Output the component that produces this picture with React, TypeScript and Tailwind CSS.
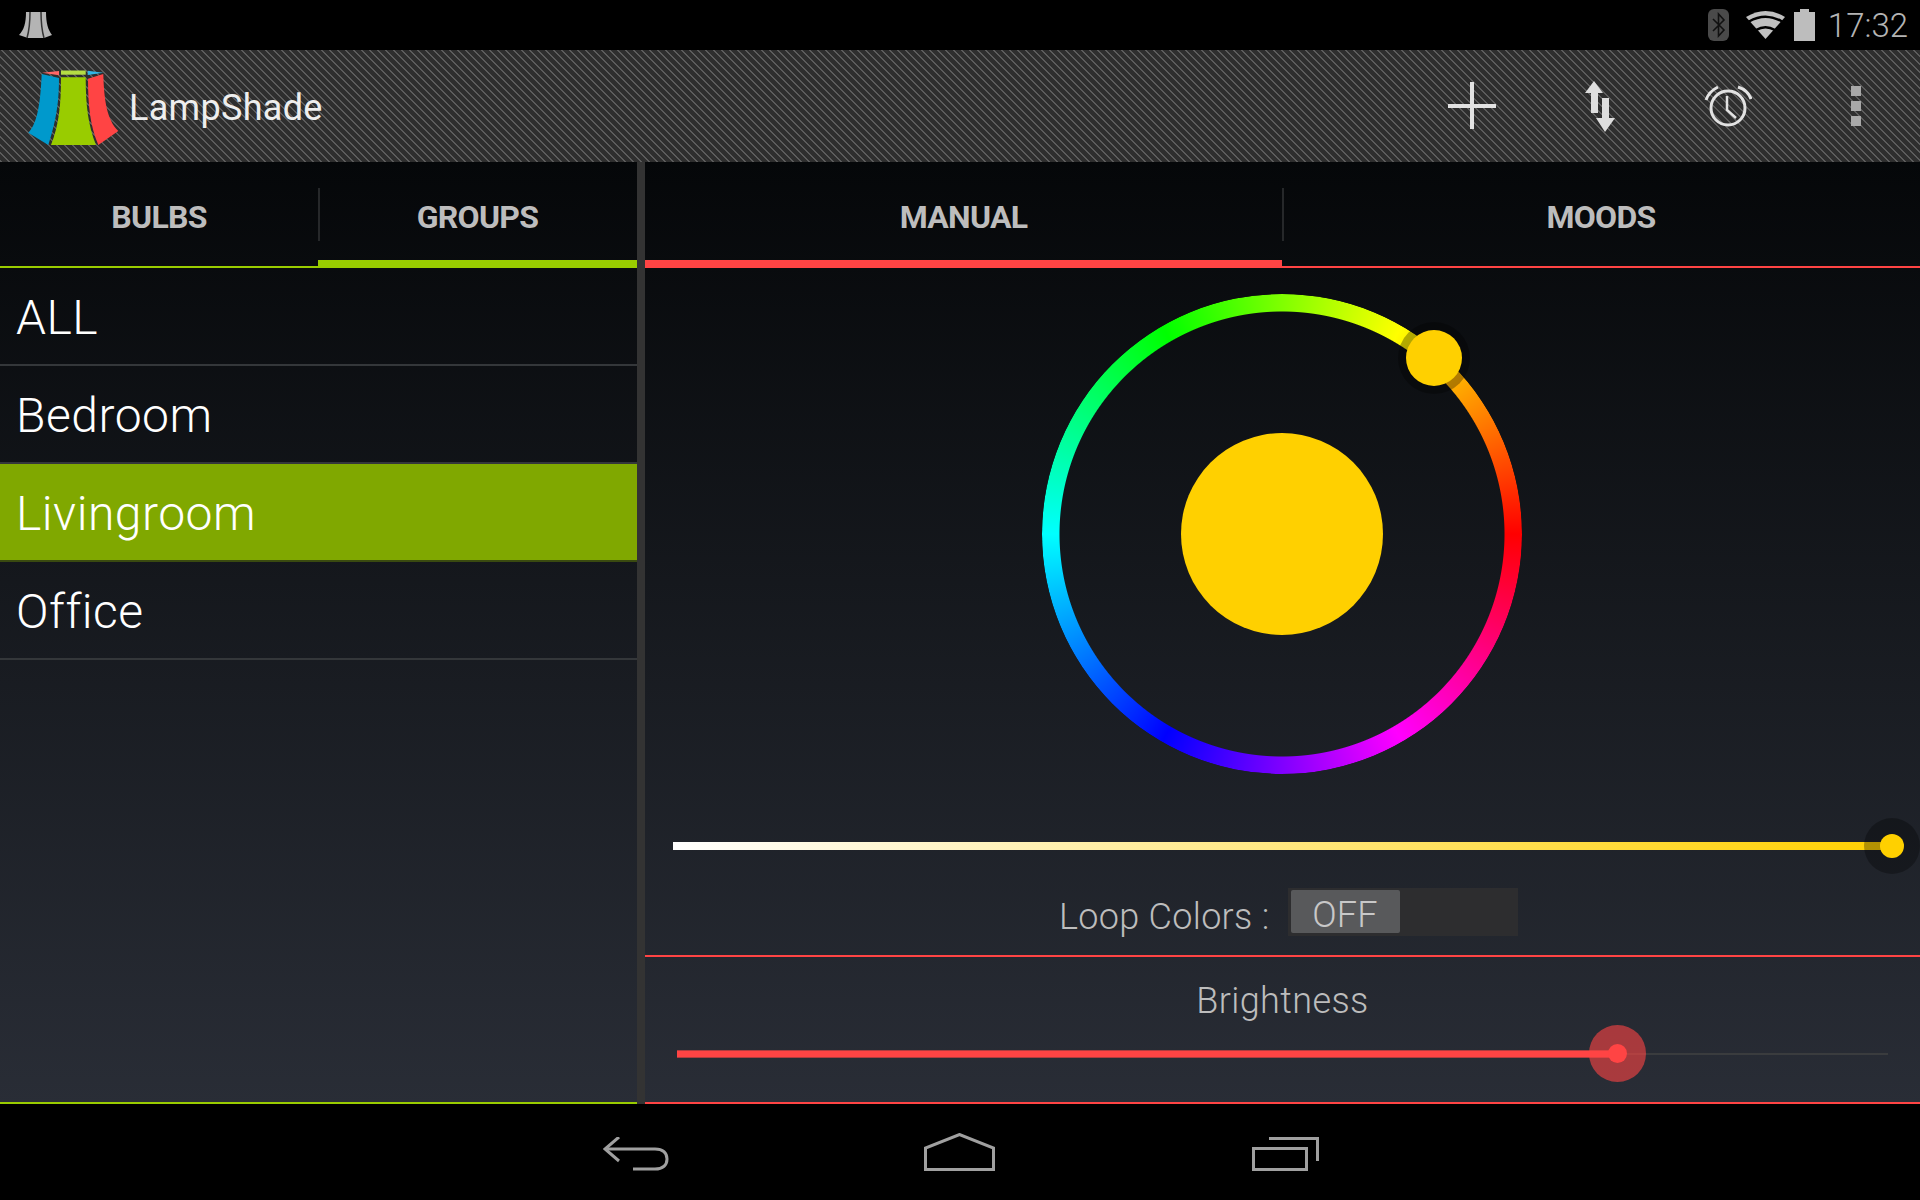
const font = "font-['Roboto',sans-serif]";

function ShadeLogo() {
  return (
    <svg width="110" height="90" viewBox="0 0 110 90" className="shrink-0 -mt-[2px]">
      <path d="M22 12.7 L39 11 L39 15.3 Z" fill="#ff6666" />
      <path d="M41 10.5 H65.7 V14.7 H41 Z" fill="#b5dd44" />
      <path d="M67.7 10.7 L83.3 12.7 L67.7 15 Z" fill="#33b5e5" />
      <path d="M21.7 14 L39 18 C39 40 37 58 28.3 85 L8.3 72.7 C18 63 20.5 40 21.7 14 Z" fill="#0099cc" />
      <path d="M41 17.3 H65.7 C65.7 45 68 65 76 85 H31 C39 65 41 45 41 17.3 Z" fill="#99cc00" />
      <path d="M68 18.7 L83.3 14 C84 40 87 60 98.3 71 L78.3 85 C70 65 68 45 68 18.7 Z" fill="#ff4444" />
    </svg>
  );
}

function SmallShade() {
  return (
    <svg width="34" height="28" viewBox="0 0 34 28">
      <path d="M7 1 L27 1 C27 12 29 19 33 24 L25 27 L9 27 L0 24 C5 19 7 12 7 1 Z" fill="#b4b4b4" />
      <path d="M11 1 C11 12 10 20 8 27 M22 1 C22 12 23 20 25 27" fill="none" stroke="#333" strokeWidth="1.5" />
    </svg>
  );
}

function Bluetooth() {
  return (
    <div className="w-[21px] h-8 rounded-[6px] bg-[#4a4a4a] flex items-center justify-center">
      <svg width="15" height="26" viewBox="0 0 15 26" fill="none" stroke="#111" strokeWidth="1.6">
        <path d="M2 7 L13 18 L7.5 24 L7.5 2 L13 8 L2 19" />
      </svg>
    </div>
  );
}

function Wifi() {
  return (
    <svg width="39" height="30" viewBox="0 0 39 30">
      <path d="M0 7 Q19.5 -5 39 7 L19.5 29 Z" fill="#c0c0c0" />
      <path d="M3 11.5 Q19.5 2 36 11.5 M10 20 Q19.5 14.5 29 20" fill="none" stroke="#000" strokeWidth="2.5" />
    </svg>
  );
}

function Battery() {
  return (
    <svg width="21" height="32" viewBox="0 0 21 32">
      <path d="M6 0 H15 V3 H21 V32 H0 V3 H6 Z" fill="#bdbdbd" />
    </svg>
  );
}

function PlusIcon() {
  return (
    <svg width="48" height="48" viewBox="0 0 48 48" fill="#e2e2e2">
      <rect x="22" y="0" width="4" height="47" />
      <rect x="0" y="22" width="48" height="4" />
    </svg>
  );
}

function SwapIcon() {
  return (
    <svg width="32" height="52" viewBox="0 0 32 52" fill="#dedede">
      <path d="M10 1 L19 13 H14 V33 H7 V13 H1 Z" />
      <path d="M18 18 H25 V38 H31 L21 52 L12 38 H18 Z" />
    </svg>
  );
}

function AlarmIcon() {
  return (
    <svg width="48" height="44" viewBox="0 0 48 44" fill="none" stroke="#e2e2e2">
      <circle cx="24" cy="24" r="17" strokeWidth="3" />
      <path d="M23 12 V26 L32 34" strokeWidth="2.5" />
      <path d="M2 16 C4 10 8 6 14 3 M47 15 C45 9 40 5 34 3" strokeWidth="3" />
    </svg>
  );
}

function MenuDots() {
  return (
    <div className="flex flex-col gap-[5px]">
      <div className="w-[10px] h-[10px] bg-[#a8a8a8]" />
      <div className="w-[10px] h-[10px] bg-[#a8a8a8]" />
      <div className="w-[10px] h-[10px] bg-[#a8a8a8]" />
    </div>
  );
}

function BackIcon() {
  return (
    <svg width="66" height="34" viewBox="0 0 66 34" fill="none" stroke="#a0a0a0" strokeWidth="3">
      <path d="M16 0 L2 12 L16 24" />
      <path d="M2 12 H52 C60 12 64 16 64 22 C64 28 60 32 52 32 H30" />
    </svg>
  );
}

function HomeIcon() {
  return (
    <svg width="71" height="38" viewBox="0 0 71 38" fill="none" stroke="#a0a0a0" strokeWidth="3">
      <path d="M1.5 36.5 V15 L35.5 1.5 L69.5 15 V36.5 Z" />
    </svg>
  );
}

function RecentsIcon() {
  return (
    <svg width="67" height="34" viewBox="0 0 67 34" fill="none" stroke="#a0a0a0" strokeWidth="3">
      <rect x="1.5" y="11.5" width="53" height="21" />
      <path d="M17 1.5 H65.5 V24" />
    </svg>
  );
}

function Tab({ label, active, color, width }: { label: string; active?: boolean; color: string; width: string }) {
  return (
    <div className={`relative h-full flex items-center justify-center pt-[5px] ${width}`}>
      <span className="text-[32px] leading-none font-bold text-[#bdbdbd] tracking-[-0.7px]">{label}</span>
      {active && <div className={`absolute left-0 right-0 bottom-0 h-[6px] ${color}`} />}
    </div>
  );
}

function GroupRow({ name, selected }: { name: string; selected?: boolean }) {
  return (
    <div
      className={`h-[98px] flex items-center pl-[16px] pt-[3px] border-b-2 text-[48px] tracking-[0.5px] font-light text-white ${
        selected ? "bg-[#80a800] border-[#3a4a10]" : "border-[#34373a]"
      }`}
    >
      {name}
    </div>
  );
}

export default function App() {
  const groups = ["ALL", "Bedroom", "Livingroom", "Office"];

  return (
    <div className={`w-[1920px] h-[1200px] bg-black flex flex-col overflow-hidden ${font}`}>
      {/* status bar */}
      <div className="h-[50px] flex items-center pl-[19px] pr-[12px]">
        <SmallShade />
        <div className="ml-auto flex items-center">
          <Bluetooth />
          <div className="ml-[17px]"><Wifi /></div>
          <div className="ml-[9px]"><Battery /></div>
          <span className="ml-[13px] text-[33px] leading-none text-[#b4b4b4] font-light">17:32</span>
        </div>
      </div>

      {/* action bar */}
      <div className="h-[112px] flex items-center pl-[20px] bg-[linear-gradient(45deg,#5c5c5c_0%,#5c5c5c_12.5%,#2e2e2e_12.5%,#2e2e2e_50%,#5c5c5c_50%,#5c5c5c_62.5%,#2e2e2e_62.5%,#2e2e2e_100%)] bg-[length:8px_8px]">
        <ShadeLogo />
        <span className="-ml-[1px] mt-[4px] text-[36px] leading-none tracking-[0.3px] text-[#eeeeee]">LampShade</span>
        <div className="ml-auto flex items-center">
          <PlusIcon />
          <div className="ml-[88px]"><SwapIcon /></div>
          <div className="ml-[88px]"><AlarmIcon /></div>
          <div className="ml-[99px] mr-[59px]"><MenuDots /></div>
        </div>
      </div>

      {/* main content */}
      <div className="h-[942px] flex bg-[linear-gradient(180deg,#050709_0%,#292d36_100%)]">
        <div className="w-[637px] flex flex-col border-b-2 border-[#99cc00]">
          <div className="h-[106px] flex items-center border-b-2 border-[#99cc00]">
            <Tab label="BULBS" color="bg-[#99cc00]" width="w-[318px]" />
            <div className="w-[2px] -mr-[2px] h-[53px] bg-[#26282a]" />
            <Tab label="GROUPS" active color="bg-[#99cc00]" width="flex-1" />
          </div>
          {groups.map((g) => (
            <GroupRow key={g} name={g} selected={g === "Livingroom"} />
          ))}
        </div>

        <div className="w-2 bg-[#333333]" />

        <div className="flex-1 flex flex-col border-b-2 border-[#ff4444]">
          <div className="h-[106px] flex items-center border-b-2 border-[#ff4444] shrink-0">
            <Tab label="MANUAL" active color="bg-[#ff4444]" width="w-[637px]" />
            <div className="w-[2px] -mr-[2px] h-[53px] bg-[#26282a]" />
            <Tab label="MOODS" color="bg-[#ff4444]" width="flex-1" />
          </div>

          {/* colour wheel */}
          <div className="h-[480px] mt-[26px] pr-[1px] shrink-0 flex justify-center">
            <div className="relative w-[480px] h-[480px] flex items-center justify-center">
              <div className="absolute inset-0 rounded-full bg-[conic-gradient(from_90deg,#ff0000,#ff00ff,#0000ff,#00ffff,#00ff00,#ffff00,#ff0000)] [mask-image:radial-gradient(closest-side,transparent_222px,black_223px)]" />
              <div className="w-[202px] h-[202px] rounded-full bg-[#ffd000]" />
              <div className="absolute left-[356px] top-[28px] w-[72px] h-[72px] rounded-full bg-black/30 flex items-center justify-center">
                <div className="w-[56px] h-[56px] rounded-full bg-[#ffd000]" />
              </div>
            </div>
          </div>

          {/* white to colour slider */}
          <div className="relative h-2 mt-[68px] ml-[28px] mr-[28px] shrink-0 bg-[linear-gradient(90deg,#ffffff,#ffd000)]">
            <div className="absolute -right-[28px] -top-[24px] w-[56px] h-[56px] rounded-full bg-black/30 flex items-center justify-center">
              <div className="w-6 h-6 rounded-full bg-[#ffd000]" />
            </div>
          </div>

          {/* loop colours */}
          <div className="h-[48px] mt-[38px] pl-[414px] shrink-0 flex items-center text-[36px] text-[#bdbdbd] tracking-[0.3px]">
            <span className="mr-[18px] mt-[10px] font-light">Loop Colors :</span>
            <div className="w-[230px] h-[48px] bg-[#2d2d2f] px-[3px] py-[2px]">
              <div className="w-[109px] h-[43px] pt-[6px] rounded-[2px] bg-[#58595b] flex items-center justify-center leading-none text-[#c8c8c8] font-light">
                OFF
              </div>
            </div>
          </div>

          {/* brightness */}
          <div className="flex-1 mt-[19px] border-t-2 border-[#ff4444] flex flex-col">
            <span className="mt-[22px] self-center text-[36px] leading-[44px] tracking-[0.4px] text-[#bdbdbd] font-light">Brightness</span>
            <div className="relative w-[1211px] h-[2px] mt-[30px] ml-[32px] bg-[#3a3c3e]">
              <div className="absolute left-0 -top-[3px] h-2 w-[940px] bg-[#ff4444] border-y border-[#b03c3e]" />
              <div className="absolute left-[912px] -top-[28px] w-[57px] h-[57px] rounded-full bg-[#ff4444]/60 flex items-center justify-center">
                <div className="w-[19px] h-[19px] rounded-full bg-[#ff4444]" />
              </div>
            </div>
          </div>
        </div>
      </div>

      {/* navigation bar */}
      <div className="flex-1 relative flex items-center">
        <div className="ml-[603px] mt-[4px]"><BackIcon /></div>
        <div className="ml-[255px]"><HomeIcon /></div>
        <div className="ml-[257px] mt-[4px]"><RecentsIcon /></div>
      </div>
    </div>
  );
}
